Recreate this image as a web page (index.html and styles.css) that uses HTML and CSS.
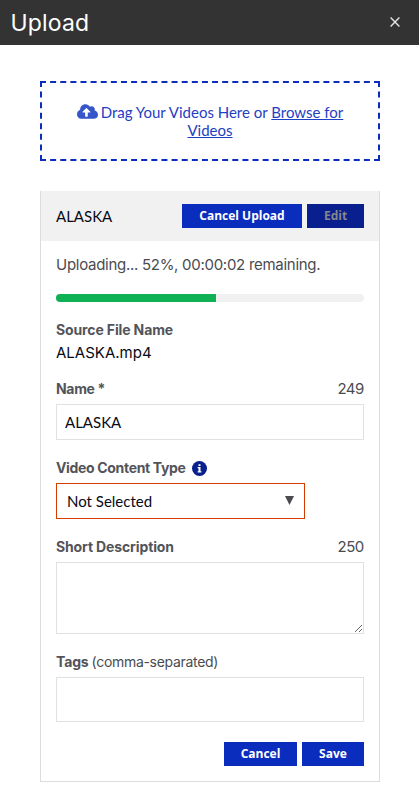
FILE: index.html
```html
<!DOCTYPE html>
<html lang="en">
<head>
<meta charset="utf-8">
<title>Upload</title>
<link rel="stylesheet" href="styles.css">
</head>
<body>
<header class="titlebar">
  <h1 class="title">Upload</h1>
  <svg class="close" viewBox="0 0 10 10" aria-label="Close"><path d="M.6.6l8.800 8.800M9.400.6L.6 9.400"/></svg>
</header>
<main class="content">
  <div class="dropzone">
    <p class="drop-text"><svg class="cloud" viewBox="0 0 640 512"><path d="M537.6 226.6c4.1-10.7 6.400-22.400 6.400-34.600 0-53-43-96-96-96-19.700 0-38.100 6-53.300 16.200C367 64.200 315.300 32 256 32c-88.400 0-160 71.600-160 160 0 2.700.1 5.400.2 8.100C40.200 219.800 0 273.200 0 336c0 79.500 64.500 144 144 144h368c70.700 0 128-57.300 128-128 0-61.900-44-113.600-102.400-125.400zM393.400 288H328v112c0 8.800-7.200 16-16 16h-48c-8.800 0-16-7.200-16-16V288h-65.400c-14.300 0-21.400-17.200-11.300-27.300l105.400-105.400c6.200-6.200 16.400-6.200 22.600 0l105.400 105.400c10.100 10.100 2.900 27.300-11.300 27.300z"/></svg><span>Drag Your Videos Here or <a class="browse">Browse for<br>Videos</a></span></p>
  </div>
  <section class="panel">
    <div class="panel-head">
      <span class="video-name">ALASKA</span>
      <button class="btn btn-upload">Cancel Upload</button>
      <button class="btn btn-edit" disabled>Edit</button>
    </div>
    <div class="panel-body">
      <p class="status">Uploading... 52%, 00:00:02 remaining.</p>
      <div class="progress"><div class="progress-fill" style="width:52%"></div></div>
      <div class="label-row source"><span class="label l-source">Source File Name</span></div>
      <p class="filename">ALASKA.mp4</p>
      <div class="label-row"><label class="label l-name">Name *</label><span class="count">249</span></div>
      <input class="field" type="text" value="ALASKA">
      <div class="label-row"><label class="label l-type">Video Content Type</label><svg class="info" viewBox="0 0 15 15"><circle cx="7.500" cy="7.500" r="7.500"/><path d="M6.500 3.200h2v1.800h-2zM5.600 6h2.900v4.200h.9v1.300H5.600v-1.300h.9V7.300h-.9z"/></svg></div>
      <div class="select"><span>Not Selected</span><svg class="arrow" viewBox="0 0 9 9"><path d="M0 0h9L4.500 9z"/></svg></div>
      <div class="label-row"><label class="label l-short">Short Description</label><span class="count">250</span></div>
      <textarea class="area"></textarea>
      <div class="label-row"><label class="label l-tags">Tags</label><span class="hint">(comma-separated)</span></div>
      <input class="field tags" type="text">
      <div class="actions"><button class="btn btn-cancel">Cancel</button><button class="btn btn-save">Save</button></div>
    </div>
  </section>
</main>
</body>
</html>
```
FILE: styles.css
```css
* { box-sizing: border-box; }
body { margin: 0; width: 419px; background: #fff; color: #4a4b50; font: 15px/20px Inter, sans-serif; overflow: hidden; }
p, h1 { margin: 0; }
.titlebar { height: 45px; padding: 0 19px 0 10.500px; background: #333; display: flex; align-items: center; justify-content: space-between; }
.title { color: #fff; font-size: 23px; line-height: 44px; font-weight: 400; letter-spacing: .15px; }
.close { width: 10px; height: 10px; margin-top: -1px; fill: none; stroke: #e4e4e4; stroke-width: 1.400; }
.content { padding: 36px 39px 0 40px; }
.dropzone { width: 340px; height: 80px; border: 2px dashed #0a2dbd; padding: 20px 26px; text-align: center; }
.drop-text { color: #1f40c3; font: 15px/18px Lato, sans-serif; }
.cloud { width: 21px; height: 17px; vertical-align: -2px; margin-right: 3px; fill: #3555c9; }
.browse { text-decoration: underline; }
.panel { width: 340px; height: 591px; margin-top: 30px; border: 1px solid #dcdcdc; border-top: 0; }
.panel-head { height: 50px; padding: 0 15px; background: #f1f1f1; display: flex; align-items: center; }
.video-name { flex: 1; color: #080a16; font: 15px/20px Lato, sans-serif; }
.btn { height: 24px; padding: 0; border: 0; border-radius: 0; background: #0a2dbd; color: #fff; font: 700 12px/24px "Open Sans", sans-serif; }
.btn-upload { width: 120px; }
.btn-edit { width: 57px; margin-left: 5px; background: #081f8d; color: #85878d; }
.panel-body { padding: 14px 15px 0; }
.status { white-space: nowrap; letter-spacing: -.28px; }
.progress { height: 8px; margin-top: 19px; border-radius: 4px; overflow: hidden; background: #f1f1f1; }
.progress-fill { height: 8px; background: #10b055; }
.label-row { display: flex; align-items: center; height: 20px; margin-top: 18px; margin-bottom: 5px; }
.label-row.source { margin-bottom: 3px; }
.label { font-weight: 700; font-size: 14px; white-space: nowrap; letter-spacing: -.13px; color: #53545a; }
.l-name, .l-type { letter-spacing: -.33px; }
.filename { color: #080a16; height: 20px; }
.filename + .label-row { margin-top: 16px; }
.count { margin-left: auto; letter-spacing: -.5px; margin-right: .2px; }
.field { display: block; width: 308px; height: 36px; padding: 0 8px; border: 1px solid #e1e1e1; border-radius: 0; color: #080a16; font: 15px Lato, sans-serif; }
.field.tags { height: 45px; }
.info { width: 15px; height: 15px; margin-left: 6px; fill: #081f8d; }
.info path { fill: #fff; }
.select { width: 249px; height: 36px; padding: 0 10px; border: 1px solid #d63c00; display: flex; align-items: center; justify-content: space-between; color: #080a16; font: 15px/20px Lato, sans-serif; }
.arrow { width: 9px; height: 9px; margin-top: -1px; fill: #4a4b50; }
.area { display: block; width: 308px; height: 72px; border: 1px solid #e1e1e1; border-radius: 0; resize: both; }
.l-tags { letter-spacing: -.15px; }
.hint { margin-left: 3px; font-size: 14px; letter-spacing: -.3px; }
.actions { display: flex; justify-content: flex-end; gap: 5px; margin-top: 20px; }
.btn-cancel { width: 73px; }
.btn-save { width: 62px; }
```
